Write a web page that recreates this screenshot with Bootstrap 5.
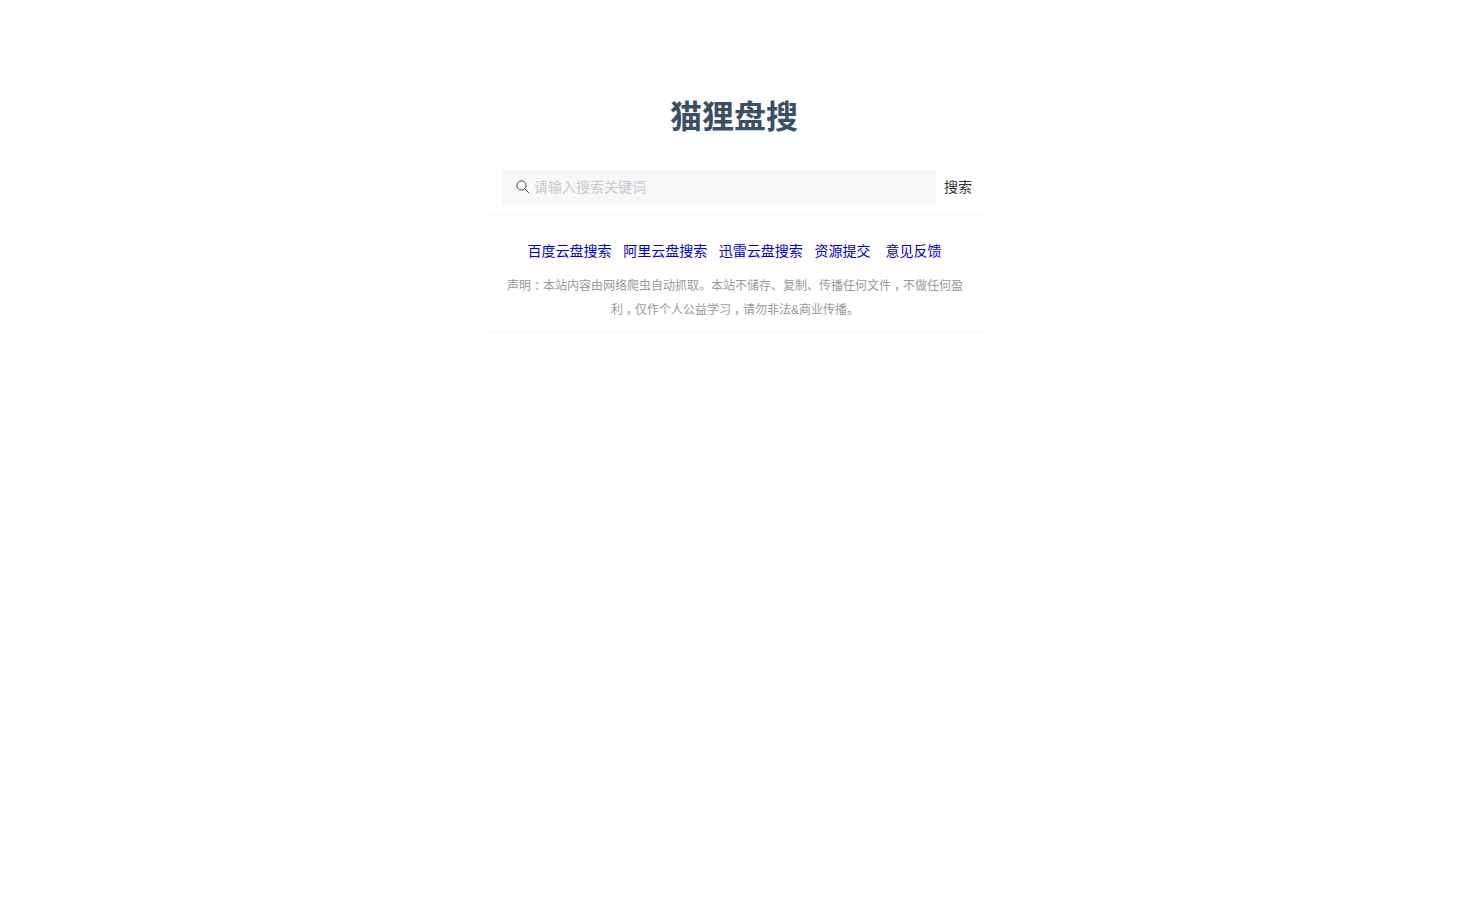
<!doctype html>
<html lang="zh-CN"><head><meta charset="utf-8"><title>猫狸盘搜</title>
<link href="https://cdn.jsdelivr.net/npm/bootstrap@5.3.0/dist/css/bootstrap.min.css" rel="stylesheet">
<style>
body{font-family:"Liberation Sans","Noto Sans CJK SC",sans-serif;background:#fff}
.shell{width:494px;margin:0 auto;padding-top:97px}
.brand{font-size:32px;line-height:41px;font-weight:700;color:#3a4f66;margin:0 0 31px;text-align:center;transform:translateX(-1px)}
.searchrow{height:35px;padding:0 10px 0 14px;margin-bottom:10px}
.searchbox{background:#f7f8fa;height:35px;padding-left:14px}
.searchbox input{border:0;background:transparent;outline:0;font-size:14px;padding:0;color:#333;position:relative;top:1px}
.searchbox input::placeholder{color:#c8c9cc}
.gobtn{font-size:14px;color:#333;border:0;background:none;padding:0;margin-left:8px;white-space:nowrap;position:relative;top:1px}
.rule{border-top:1px solid #f5f5f5}
.linksrow{font-size:14px;line-height:20px;padding-top:26px;padding-right:1px}
.linksrow a{color:#00c;text-decoration:none;margin-right:11.7px}
.linksrow a:nth-child(4){margin-right:15px}
.linksrow a:last-child{margin-right:0}
.notice{font-size:12px;line-height:24px;color:#999;padding:13px 16px 9px;margin:0;text-align:center}
.punct{font-feature-settings:"halt";padding:0 3px}
</style></head><body>
<div class="shell">
<h1 class="brand">猫狸盘搜</h1>
<div class="searchrow d-flex align-items-center">
<div class="searchbox flex-grow-1 d-flex align-items-center gap-1">
<svg width="14" height="14" viewBox="0 0 14 14" fill="none" stroke="#444" stroke-width="1"><circle cx="5.5" cy="5.5" r="4.6"/><path d="M8.9 8.9 13.2 13.2"/></svg>
<input class="flex-grow-1" placeholder="请输入搜索关键词">
</div>
<button class="gobtn">搜索</button>
</div>
<div class="rule"></div>
<div class="linksrow d-flex justify-content-center"><a href="#">百度云盘搜索</a><a href="#">阿里云盘搜索</a><a href="#">迅雷云盘搜索</a><a href="#">资源提交</a><a href="#">意见反馈</a></div>
<p class="notice">声明<span class="punct">：</span>本站内容由网络爬虫自动抓取。本站不储存、复制、传播任何文件<span class="punct">，</span>不做任何盈<br>利<span class="punct">，</span>仅作个人公益学习<span class="punct">，</span>请勿非法&amp;商业传播。</p>
<div class="rule"></div>
</div>
<script src="https://cdn.jsdelivr.net/npm/bootstrap@5.3.0/dist/js/bootstrap.bundle.min.js"></script>
</body></html>
